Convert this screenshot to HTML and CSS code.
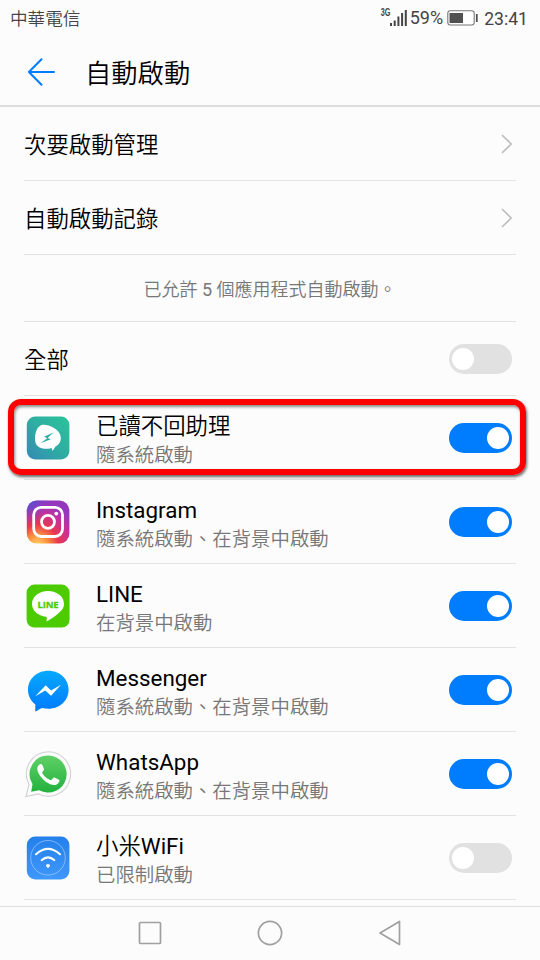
FILE: index.html
```html
<!DOCTYPE html>
<html lang="zh-Hant">
<head>
<meta charset="utf-8">
<title>自動啟動</title>
<link rel="stylesheet" href="styles.css">
</head>
<body>
<div class="screen">
  <header class="status">
    <span class="carrier">中華電信</span>
    <div class="indicators">
      <span class="net">3G</span>
      <svg class="signal" width="17" height="17" viewBox="0 0 17 17" fill="#444"><path d="M0 14h2v3H0zM3.700 11.500h2V17h-2zM7.400 7.500h2V17h-2zM11.100 4h2v13h-2zM14.800 1h2v16h-2z"/></svg>
      <span class="percent">59%</span>
      <svg class="battery" width="32" height="16" viewBox="0 0 32 16"><rect x=".8" y=".8" width="26.400" height="14.200" rx="2.500" fill="#fff" stroke="#777" stroke-width="1.100"/><path d="M2.500 3h13.500v10H2.500z" fill="#505050"/><path d="M29.800 4v8" stroke="#555" stroke-width="1.800"/></svg>
      <span class="clock">23:41</span>
    </div>
  </header>
  <div class="titlebar">
    <svg class="back" width="28" height="28" viewBox="0 0 28 28" fill="none" stroke="#007dff" stroke-width="2" stroke-linecap="round" stroke-linejoin="round"><path d="M14.500 1.200 1.900 14 14.500 26.800M1.900 14H27"/></svg>
    <h1>自動啟動</h1>
  </div>
  <main>
    <div class="row link"><span class="name">次要啟動管理</span><svg class="chevron" width="12" height="20" viewBox="0 0 12 20"><path d="M1.500 1.500 10.300 10 1.500 18.500"/></svg></div>
    <div class="row link"><span class="name">自動啟動記錄</span><svg class="chevron" width="12" height="20" viewBox="0 0 12 20"><path d="M1.500 1.500 10.300 10 1.500 18.500"/></svg></div>
    <div class="row note"><p>已允許 <span class="latin">5</span> 個應用程式自動啟動。</p></div>
    <div class="row all"><span class="name">全部</span><span class="switch"></span></div>

    <div class="row app marked">
      <svg class="icon" viewBox="0 0 48 48"><defs><linearGradient id="teal" x1="1" y1="0" x2="0" y2="1"><stop offset="0" stop-color="#2ac49a"/><stop offset=".5" stop-color="#2fada2"/><stop offset="1" stop-color="#3589b5"/></linearGradient></defs><rect x="2.800" y="2.600" width="42.600" height="43" rx="8.500" fill="url(#teal)"/><path d="M17 11.200C22 9.500 31 13 35 18.500C38.700 24 36.500 30 31.500 32.500L28.500 37L27.700 34C21 36 14 34.500 11.800 29.500C10 23.500 11.500 13.500 17 11.200Z" fill="#fff"/><path d="M30 18.300 20 22.800 23.300 24.200 16.500 29.200 26.800 25.300 23.700 24 25.800 21.800Z" fill="#2caaa2"/></svg>
      <div class="text"><span class="name">已讀不回助理</span><span class="desc">隨系統啟動</span></div>
      <span class="switch on"></span>
    </div>
    <div class="row app">
      <svg class="icon" viewBox="0 0 48 48"><defs><radialGradient id="igw" cx=".25" cy="1.05" r="1"><stop offset="0" stop-color="#ffd86b"/><stop offset=".25" stop-color="#fb923e"/><stop offset=".5" stop-color="#e9364f"/><stop offset=".78" stop-color="#c7309a"/><stop offset="1" stop-color="#9437bd"/></radialGradient><radialGradient id="igb" cx="0" cy="0" r=".55"><stop offset="0" stop-color="#4658d6"/><stop offset="1" stop-color="#7540c8" stop-opacity="0"/></radialGradient></defs><rect x="2.800" y="2.600" width="42.600" height="43" rx="10" fill="url(#igw)"/><rect x="2.800" y="2.600" width="42.600" height="43" rx="10" fill="url(#igb)"/><g fill="none" stroke="#fff" stroke-width="2.800"><rect x="9.700" y="9.300" width="28.800" height="29.200" rx="7.500"/><circle cx="24" cy="23.800" r="6.500"/></g><circle cx="32.300" cy="15.600" r="1.900" fill="#fff"/></svg>
      <div class="text"><span class="name latin">Instagram</span><span class="desc">隨系統啟動、在背景中啟動</span></div>
      <span class="switch on"></span>
    </div>
    <div class="row app">
      <svg class="icon" viewBox="0 0 48 48"><rect x="2.600" y="2.600" width="43" height="43" rx="8" fill="#4ccc00"/><path d="M24 9C33 9 40 14.500 40 22C40 26 37.500 28.700 34.500 31.200C31 34.300 27.500 36.500 22.500 39.400C22.500 38 23.600 35.600 22 34.800C14 33.500 8 29 8 22C8 14.500 15 9 24 9Z" fill="#fff"/><text x="24" y="25.500" text-anchor="middle" textLength="21" class="line-word">LINE</text></svg>
      <div class="text"><span class="name latin">LINE</span><span class="desc">在背景中啟動</span></div>
      <span class="switch on"></span>
    </div>
    <div class="row app">
      <svg class="icon" viewBox="0 0 48 48"><defs><linearGradient id="msg" x1="0" y1="0" x2="0" y2="1"><stop offset="0" stop-color="#06a9fd"/><stop offset="1" stop-color="#007aff"/></linearGradient></defs><path d="M24.300 4.700C36 4.700 44.600 13.200 44.600 23.700C44.600 34.200 36 42.700 24.300 42.700C22.300 42.700 20.300 42.400 18.500 42C16 42.400 14 44.700 11.300 45.600V38.400C6.700 34.900 4 29.700 4 23.700C4 13.200 12.600 4.700 24.300 4.700Z" fill="url(#msg)"/><path d="M11.300 30.300 21.700 19.300 27 24.500 37 18.800 27 29.800 21.300 24.600Z" fill="#fff"/></svg>
      <div class="text"><span class="name latin">Messenger</span><span class="desc">隨系統啟動、在背景中啟動</span></div>
      <span class="switch on"></span>
    </div>
    <div class="row app">
      <svg class="icon" viewBox="0 0 48 48"><defs><linearGradient id="wa" x1="0" y1="0" x2="0" y2="1"><stop offset="0" stop-color="#5fd066"/><stop offset="1" stop-color="#23b13e"/></linearGradient></defs><path d="M24.300 1.800A22.200 22.200 0 1 1 14.500 43.900L2 46.500 5 34.500A22.200 22.200 0 0 1 24.300 1.800Z" fill="#fbfbfb" stroke="#d2d2d2" stroke-width="1.100"/><path d="M24.300 5.600A18.500 18.500 0 1 1 15.200 40.300L7.200 41.700 8.500 34A18.500 18.500 0 0 1 24.300 5.600Z" fill="url(#wa)"/><path d="M17 15.200C18.500 14.500 19.200 15.500 19.700 16.800L21 20C21.300 21.400 19.800 22.300 19 23.400C20.500 27 24 30 28 31.200C29.500 30.500 30.200 28.200 31.600 28.600L36 30.700C37.600 31.600 35.200 35 33.200 35.700C29 37 23.400 33.800 19.500 29.800C16.500 26.500 14.300 23 14.300 19.700C14.300 17.800 15.500 15.800 17 15.200Z" transform="translate(-1 -1)" fill="#fff"/></svg>
      <div class="text"><span class="name latin">WhatsApp</span><span class="desc">隨系統啟動、在背景中啟動</span></div>
      <span class="switch on"></span>
    </div>
    <div class="row app">
      <svg class="icon" viewBox="0 0 48 48"><defs><linearGradient id="mi" x1="0" y1="0" x2="0" y2="1"><stop offset="0" stop-color="#237fea"/><stop offset="1" stop-color="#3f98fb"/></linearGradient></defs><rect x="2.800" y="2.400" width="42.600" height="43" rx="8.500" fill="url(#mi)"/><circle cx="24" cy="23.800" r="17.300" fill="none" stroke="#a5cdfb" stroke-width=".7"/><g fill="none" stroke="#fff" stroke-width="2" stroke-linecap="round"><path d="M12 20.300Q24 9.500 36 20.300M17.600 26.200Q24 20.500 30.400 26.200"/></g><path d="M24 30.200c1.500 0 2.300.7 2 1.700l-2 2.400-2-2.400c-.3-1 .5-1.700 2-1.700z" fill="#fff"/></svg>
      <div class="text"><span class="name">小米<span class="latin">WiFi</span></span><span class="desc">已限制啟動</span></div>
      <span class="switch"></span>
    </div>
  </main>
  <nav class="navbar">
    <svg width="26" height="26" viewBox="0 0 26 26"><rect x="2.500" y="2.500" width="21" height="21" rx="1"/></svg>
    <svg width="26" height="26" viewBox="0 0 26 26"><circle cx="13" cy="13" r="11.600"/></svg>
    <svg width="26" height="26" viewBox="0 0 26 26"><path d="M22.500 1.500V24.500L3 13Z"/></svg>
  </nav>
</div>
</body>
</html>
```

FILE: styles.css
```css
* { box-sizing: border-box; }
body {
  margin: 0;
  background: #fcfcfc;
  color: #000;
  font-family: Roboto, "Noto Sans CJK TC", sans-serif;
}
.screen {
  width: 540px;
  height: 960px;
  display: flex;
  flex-direction: column;
  overflow: hidden;
}
.status {
  height: 38px;
  display: flex;
  justify-content: space-between;
  padding: 0 12px 0 10px;
  color: #444;
  font-size: 17.6px;
  line-height: 38px;
}
.carrier { font-weight: 350; }
.indicators { display: flex; }
.net {
  font: 700 10px/12px "Liberation Sans", sans-serif;
  margin: 7px -1px 0 0;
  transform: scaleX(.72);
  transform-origin: right;
}
.signal { margin: 9px 3px 0 0; }
.percent { line-height: 36px; font-size: 18px; }
.battery { margin: 10px 5px 0 4px; }
.titlebar {
  height: 69px;
  display: flex;
  align-items: center;
  gap: 30px;
  padding-left: 27px;
  border-bottom: 2px solid #dedede;
}
h1 {
  margin: 4px 0 0;
  font-size: 26.3px;
  font-weight: 350;
  line-height: 40px;
}
main { flex: 1; padding: 0 24px; }
.row {
  display: flex;
  align-items: center;
  border-bottom: 1px solid #e2e2e2;
}
.link, .all { height: 74px; justify-content: space-between; }
.link { padding-right: 3px; }
.link .name, .all .name { padding-top: 3px; }
.chevron { fill: none; stroke: #bdbdbd; stroke-width: 1.7; stroke-linecap: round; stroke-linejoin: round; }
.note {
  height: 67px;
  justify-content: center;
  color: #777;
  font-size: 18px;
  font-weight: 350;
}
.note p { margin: 0; }
.name { font-size: 22.4px; line-height: 30px; font-weight: 350; }
.latin { font-weight: 400; }
.desc { font-size: 19.4px; line-height: 26px; color: #777; font-weight: 350; }
.app { height: 84px; position: relative; }
.text { flex: 1; display: flex; flex-direction: column; gap: 2px; margin-left: 24px; padding-top: 4px; }
.icon { width: 48px; height: 48px; flex: none; }
.line-word { font: 700 9.5px "Open Sans", sans-serif; fill: #4ccc00; stroke: #4ccc00; stroke-width: .3px; }
.switch {
  width: 63px;
  height: 30px;
  margin-right: 4.5px;
  padding: 4px 3px;
  border-radius: 15px;
  background: #e1e1e1;
  display: flex;
}
.switch::before {
  content: "";
  width: 22px;
  height: 22px;
  border-radius: 50%;
  background: #fff;
}
.switch.on { background: #007dff; justify-content: flex-end; }
.marked::after {
  content: "";
  position: absolute;
  inset: 3px -10px 4px -16px;
  border: 6px solid #fe0000;
  border-radius: 13px;
  box-shadow: 1px 2px 3px rgba(0, 0, 0, .6), inset 1px 2px 3px rgba(0, 0, 0, .45);
}
.navbar {
  height: 54px;
  display: flex;
  justify-content: center;
  align-items: center;
  gap: 94px;
  padding-bottom: 2px;
  border-top: 1px solid #dedede;
}
.navbar svg { fill: none; stroke: #a0a0a0; stroke-width: 1.7; stroke-linejoin: round; }
```
